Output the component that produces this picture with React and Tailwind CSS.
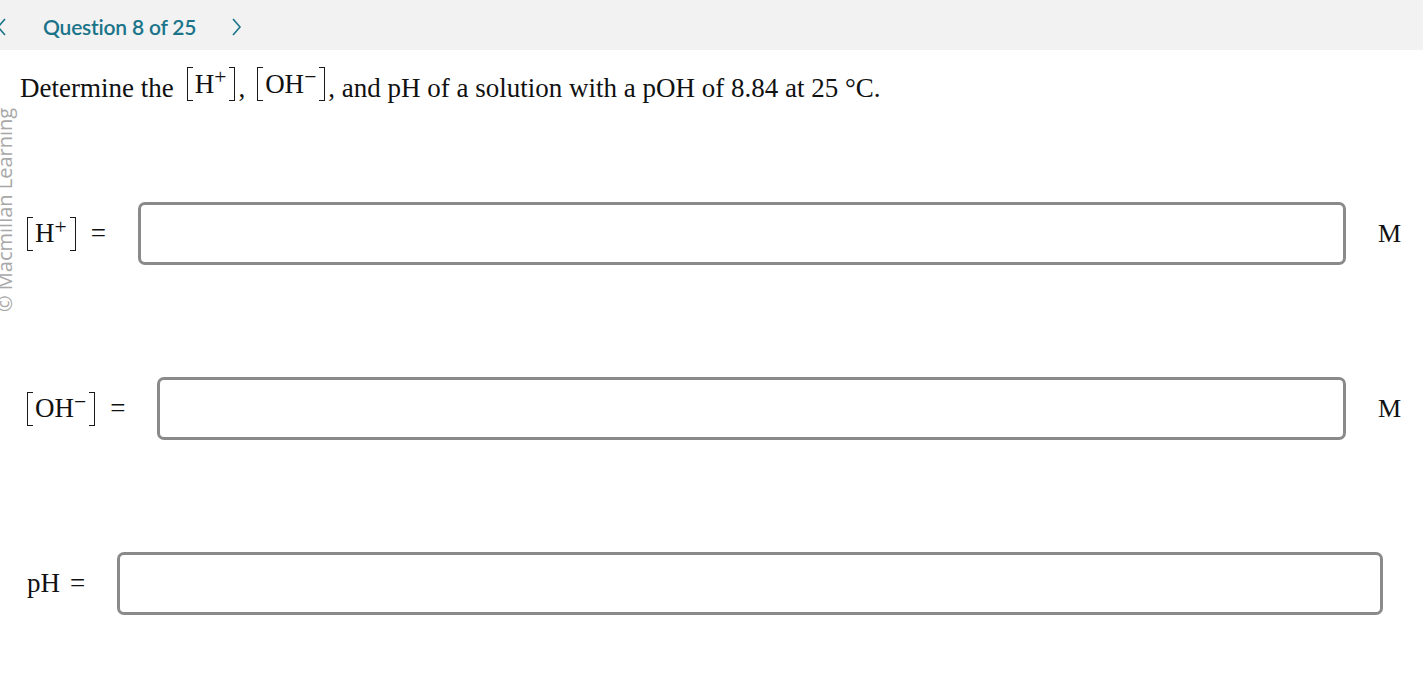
import React from 'react';

const serif = { fontFamily: '"Liberation Serif", "Times New Roman", serif' };

// tall square brackets like the math renderer draws them
const Bracket = ({ side = 'left' }) => (
    <span
        className={`inline-block h-[34px] w-[6px] border-y border-[#1a1a1a] ${side === 'left' ? 'border-l mr-[2px]' : 'border-r ml-[3px]'}`}
    />
);

const Conc = ({ base, sup }) => (
    <span className="inline-flex items-center">
        <Bracket side="left" />
        <span>
            {base}
            <sup className="text-[0.8em] -top-[0.4em]">{sup}</sup>
        </span>
        <Bracket side="right" />
    </span>
);

const AnswerRow = ({ label, unit, rightPad = 'pr-[21px]' }) => (
    <div className={`flex items-center h-[63px] pl-[27px] ${rightPad}`}>
        <div className="text-[27px] text-[#111] whitespace-nowrap flex items-center" style={serif}>{label}</div>
        <input type="text" className="flex-1 h-[63px] ml-[32px] border-[3px] border-[#8a8a8a] rounded-[7px] bg-white outline-none" />
        {unit && <div className="ml-[32px] w-[24px] text-[26px] text-[#111]" style={serif}>{unit}</div>}
    </div>
);

export default function App() {
    return (
        <div className="relative w-[1423px] h-[688px] bg-white overflow-hidden">
            {/* top nav */}
            <div className="h-[50px] bg-[#f2f2f2] flex items-center" style={{ fontFamily: 'Lato, "Open Sans", sans-serif' }}>
                <svg width="12" height="18" viewBox="0 0 12 18" className="-ml-[4px] mt-[4px]">
                    <path d="M9 1 L2 9 L9 17" fill="none" stroke="#1b7489" strokeWidth="1.6" />
                </svg>
                <span className="ml-[35px] mt-[4px] text-[21px] font-semibold text-[#1b7489] tracking-[-0.2px]">Question 8 of 25</span>
                <svg width="12" height="18" viewBox="0 0 12 18" className="ml-[34px] mt-[4px]">
                    <path d="M3 1 L10 9 L3 17" fill="none" stroke="#1b7489" strokeWidth="1.6" />
                </svg>
            </div>

            {/* watermark */}
            <div
                className="absolute left-[-4px] top-[312px] origin-top-left -rotate-90 whitespace-nowrap text-[20px] leading-[18px] text-[#a8a8a8]"
                style={{ fontFamily: '"Open Sans", "Liberation Sans", sans-serif' }}
            >
                © Macmillan Learning
            </div>

            {/* question */}
            <div className="pl-[20px] mt-[21px] h-[34px] text-[27px] text-[#111] leading-[34px] flex items-center whitespace-nowrap" style={serif}>
                <span>Determine the</span>
                <span className="ml-[13px]"><Conc base="H" sup="+" /></span>
                <span className="ml-[3px]">,</span>
                <span className="ml-[12px]"><Conc base="OH" sup="−" /></span>
                <span className="ml-[3px]">, and pH of a solution with a pOH of 8.84 at 25 °C.</span>
            </div>

            <div className="mt-[97px]">
                <AnswerRow label={<><Conc base="H" sup="+" /><span className="ml-[15px]">=</span></>} unit="M" />
            </div>
            <div className="mt-[112px]">
                <AnswerRow label={<><Conc base="OH" sup="−" /><span className="ml-[15px]">=</span></>} unit="M" />
            </div>
            <div className="mt-[112px]">
                <AnswerRow label={<><span>pH</span><span className="ml-[10px]">=</span></>} rightPad="pr-[40px]" />
            </div>
        </div>
    );
}
